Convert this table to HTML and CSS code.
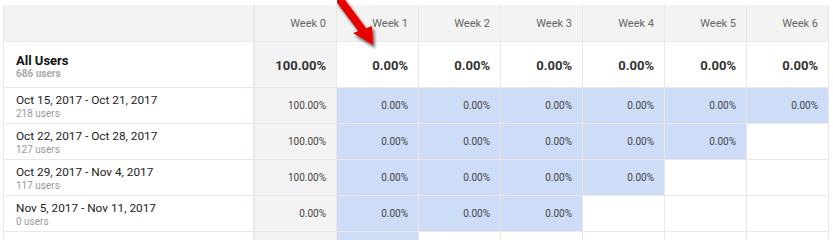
FILE: index.html
```html
<!DOCTYPE html>
<html>
<head>
<meta charset="utf-8">
<link rel="stylesheet" href="styles.css">
</head>
<body>
<div class="wrap">
  <div class="grid">
    <div class="cell head label"></div>
    <div class="cell head w0">Week 0</div>
    <div class="cell head">Week 1</div>
    <div class="cell head">Week 2</div>
    <div class="cell head">Week 3</div>
    <div class="cell head">Week 4</div>
    <div class="cell head">Week 5</div>
    <div class="cell head">Week 6</div>

    <div class="cell total label"><div class="name">All Users</div><div class="sub">686 users</div></div>
    <div class="cell total w0">100.00%</div>
    <div class="cell total">0.00%</div>
    <div class="cell total">0.00%</div>
    <div class="cell total">0.00%</div>
    <div class="cell total">0.00%</div>
    <div class="cell total">0.00%</div>
    <div class="cell total">0.00%</div>

    <div class="cell row label"><div class="date">Oct 15, 2017 - Oct 21, 2017</div><div class="count">218 users</div></div>
    <div class="cell row w0">100.00%</div>
    <div class="cell row blue">0.00%</div>
    <div class="cell row blue">0.00%</div>
    <div class="cell row blue">0.00%</div>
    <div class="cell row blue">0.00%</div>
    <div class="cell row blue">0.00%</div>
    <div class="cell row blue">0.00%</div>

    <div class="cell row label"><div class="date">Oct 22, 2017 - Oct 28, 2017</div><div class="count">127 users</div></div>
    <div class="cell row w0">100.00%</div>
    <div class="cell row blue">0.00%</div>
    <div class="cell row blue">0.00%</div>
    <div class="cell row blue">0.00%</div>
    <div class="cell row blue">0.00%</div>
    <div class="cell row blue">0.00%</div>
    <div class="cell row"></div>

    <div class="cell row label"><div class="date">Oct 29, 2017 - Nov 4, 2017</div><div class="count">117 users</div></div>
    <div class="cell row w0">100.00%</div>
    <div class="cell row blue">0.00%</div>
    <div class="cell row blue">0.00%</div>
    <div class="cell row blue">0.00%</div>
    <div class="cell row blue">0.00%</div>
    <div class="cell row"></div>
    <div class="cell row"></div>

    <div class="cell row label"><div class="date">Nov 5, 2017 - Nov 11, 2017</div><div class="count">0 users</div></div>
    <div class="cell row w0">0.00%</div>
    <div class="cell row blue">0.00%</div>
    <div class="cell row blue">0.00%</div>
    <div class="cell row blue">0.00%</div>
    <div class="cell row"></div>
    <div class="cell row"></div>
    <div class="cell row"></div>

    <div class="cell row label"></div>
    <div class="cell row w0"></div>
    <div class="cell row blue"></div>
    <div class="cell row"></div>
    <div class="cell row"></div>
    <div class="cell row"></div>
    <div class="cell row"></div>
    <div class="cell row"></div>
  </div>
  <svg class="arrow" width="52" height="56" viewBox="0 0 52 56">
    <defs>
      <filter id="sh" x="-30%" y="-30%" width="160%" height="160%">
        <feGaussianBlur in="SourceAlpha" stdDeviation="1.6" result="blur"/>
        <feOffset in="blur" dx="1.5" dy="2.5" result="off"/>
        <feComponentTransfer in="off" result="b">
          <feFuncA type="linear" slope="0.6"/>
        </feComponentTransfer>
        <feMerge><feMergeNode in="b"/><feMergeNode in="SourceGraphic"/></feMerge>
      </filter>
    </defs>
    <g filter="url(#sh)">
      <path d="M-1.7 0.4 L4.7 -4.4 L29 28 L22.6 32.8 Z" fill="#e60000"/>
      <path d="M16 33 L35 26 L36 45 Z" fill="#e60000"/>
    </g>
  </svg>
</div>
</body>
</html>
```

FILE: styles.css
```css
html, body {
  margin: 0;
  padding: 0;
  background: #fff;
}
body {
  font-family: Roboto, "Liberation Sans", Arial, sans-serif;
  color: #222;
}
.wrap {
  position: relative;
  padding: 5px 0 0 3px;
  width: 833px;
  height: 240px;
  box-sizing: border-box;
  overflow: hidden;
}
.grid {
  display: grid;
  grid-template-columns: 251px repeat(7, 82px);
  grid-template-rows: 37px 46px repeat(5, 36px);
  border-left: 1px solid #ece6e6;
  width: 825px;
}
.cell {
  box-sizing: border-box;
  border-right: 1px solid #ece6e6;
  border-bottom: 1px solid #ece6e6;
  display: flex;
  align-items: center;
  justify-content: flex-end;
  padding-right: 10px;
}
.label {
  justify-content: flex-start;
  flex-direction: column;
  align-items: flex-start;
  padding: 0 0 0 12px;
  border-right: 2px solid #ece6e6;
}
.head {
  background: #f3f3f3;
  font-size: 11px;
  color: #666;
  padding-top: 1px;
}
.head.label { background: #f3f3f3; }
.w0 { background: #f3f3f3; }
.total {
  font-size: 13px;
  font-weight: bold;
  color: #333;
  padding-top: 2px;
}
.total.label { justify-content: center; padding-top: 4px; }
.name {
  font-size: 13px;
  font-weight: bold;
  color: #111;
  line-height: 15px;
}
.sub {
  font-size: 10px;
  font-weight: bold;
  color: #aaa;
  line-height: 12px;
}
.row {
  font-size: 10px;
  color: #444;
}
.row.label {
  justify-content: flex-start;
  padding-top: 5px;
}
.date {
  font-size: 11.8px;
  color: #222;
  line-height: 15px;
}
.count {
  font-size: 10px;
  color: #999;
  line-height: 11px;
}
.blue { background: #cddcf7; }
.arrow {
  position: absolute;
  left: 337px;
  top: 0;
}
```
